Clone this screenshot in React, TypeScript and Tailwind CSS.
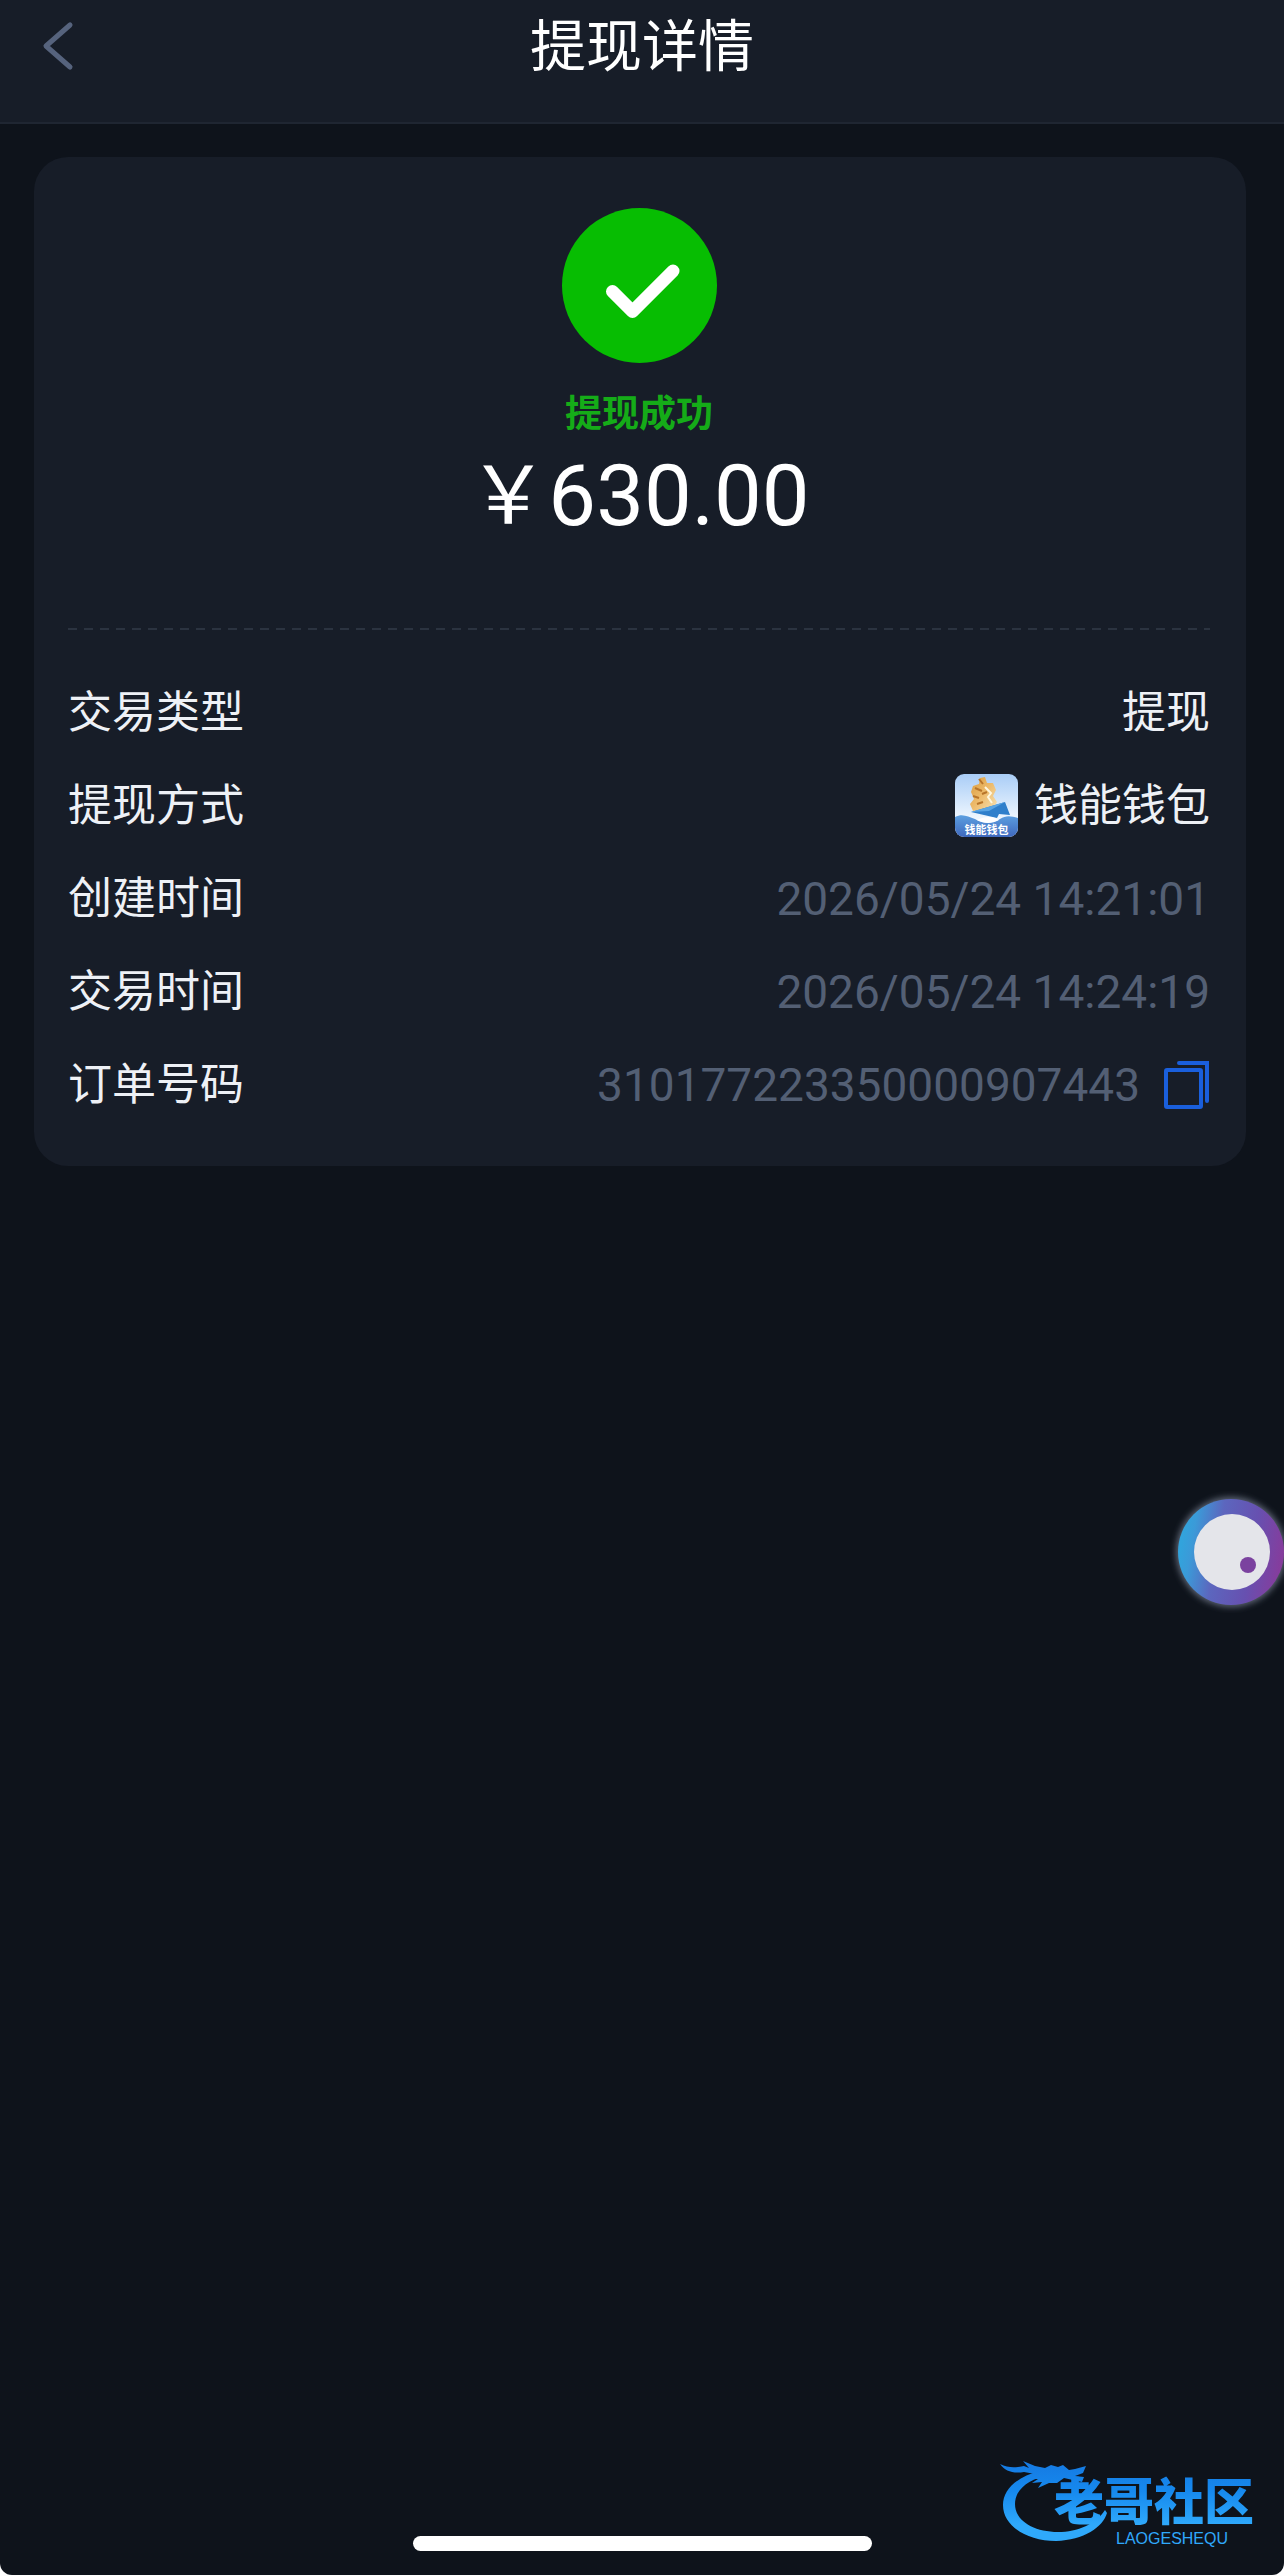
import { ReactNode } from 'react';

const ORDER_NO = '310177223350000907443';

function BackIcon() {
  return (
    <svg width="36" height="52" viewBox="0 0 36 52" fill="none" stroke="#56637d" strokeWidth="5" strokeLinecap="round" strokeLinejoin="round">
      <path d="M30 4 L6 25 L30 46" />
    </svg>
  );
}

function SuccessIcon() {
  return (
    <svg width="155" height="155" viewBox="0 0 155 155" fill="none" aria-hidden="true">
      <circle cx="77.5" cy="77.5" r="77.5" fill="#07bd02" />
      <path d="M50.5 83.5 L70.5 103.5 L111 63" stroke="#fff" strokeWidth="13" strokeLinecap="round" strokeLinejoin="round" />
    </svg>
  );
}

function CopyIcon() {
  return (
    <svg width="46" height="48" viewBox="0 0 46 48" fill="none" stroke="#1a5fdc" strokeWidth="4">
      <rect x="2" y="9" width="35" height="37" rx="1" />
      <path d="M15 2 H43 V40" strokeLinecap="round" />
    </svg>
  );
}

function WalletIcon() {
  return (
    <svg width="63" height="63" viewBox="0 0 63 63" aria-hidden="true">
      <defs>
        <linearGradient id="sky" x1="0" y1="0" x2="0" y2="1">
          <stop offset="0" stopColor="#a9cdf7" />
          <stop offset="0.7" stopColor="#eef6fe" />
        </linearGradient>
        <linearGradient id="sea" x1="0" y1="0" x2="0" y2="1">
          <stop offset="0" stopColor="#5c9fe0" />
          <stop offset="1" stopColor="#3f68bd" />
        </linearGradient>
        <linearGradient id="gold" x1="0" y1="0" x2="1" y2="1">
          <stop offset="0" stopColor="#d99a3c" />
          <stop offset="0.5" stopColor="#edbb6c" />
          <stop offset="1" stopColor="#f7e3b6" />
        </linearGradient>
        <clipPath id="tile">
          <rect width="63" height="63" rx="9" />
        </clipPath>
      </defs>
      <g clipPath="url(#tile)">
        <rect width="63" height="63" fill="url(#sky)" />
        <path d="M25 4 L30 3 L32 9 L38 9 L41 16 L38 22 L42 28 L39 33 L27 36 L18 37 L15 30 L19 25 L16 18 L18 12 L24 10 Z" fill="url(#gold)" />
        <path d="M24 5 l4 5 M20 14 l7 3 M18 22 l6 2 M27 20 l5 -2 M22 30 l6 -2" stroke="#b8752a" strokeWidth="2" />
        <path d="M30 13 l6 6 -3 4 4 6" stroke="#fff7df" strokeWidth="2" fill="none" />
        <path d="M16 38 L50 28 L55 41 L44 40 L42 44 Z" fill="#2f7fcb" />
        <path d="M16 38 L50 28 L34 37 Z" fill="#5aa5e4" />
        <path d="M0 43 C8 39 13 43 20 45 C28 50 37 50 45 45 C51 41 56 42 63 44 V63 H0 Z" fill="url(#sea)" />
        <path d="M22 46 C30 42 38 42 44 46 C37 50 29 50 22 46 Z" fill="#fff" />
        <text x="31.5" y="60" textAnchor="middle" fontSize="11" fontWeight="700" fill="#fff" fontFamily="Noto Sans CJK SC, sans-serif">钱能钱包</text>
      </g>
    </svg>
  );
}

function AssistIcon() {
  return (
    <svg width="122" height="122" viewBox="0 0 122 122" aria-hidden="true">
      <defs>
        <linearGradient id="ring" x1="0" y1="0.62" x2="0.95" y2="0.78">
          <stop offset="0" stopColor="#32a3dc" />
          <stop offset="0.1" stopColor="#3b9ad8" />
          <stop offset="0.35" stopColor="#5c66be" />
          <stop offset="0.7" stopColor="#6750b0" />
          <stop offset="1" stopColor="#863c9c" />
        </linearGradient>
        <filter id="halo" x="-20%" y="-20%" width="140%" height="140%">
          <feGaussianBlur stdDeviation="3" />
        </filter>
      </defs>
      <circle cx="61" cy="61" r="55" fill="#5d6574" filter="url(#halo)" />
      <circle cx="61" cy="61" r="53" fill="url(#ring)" />
      <circle cx="62" cy="61" r="38" fill="#e4e5ea" />
      <circle cx="78" cy="74" r="8" fill="#7b429f" />
    </svg>
  );
}

function CommunityLogo() {
  return (
    <svg width="272" height="100" viewBox="0 0 272 100" role="img" aria-label="老哥社区">
      <defs>
        <linearGradient id="brand" gradientUnits="userSpaceOnUse" x1="0" y1="10" x2="0" y2="95">
          <stop offset="0" stopColor="#1577e0" />
          <stop offset="0.4" stopColor="#1689ee" />
          <stop offset="0.8" stopColor="#2fa9fb" />
          <stop offset="1" stopColor="#2fa9fb" />
        </linearGradient>
      </defs>
      <g fill="url(#brand)">
        <path d="M44 24 C20 30 7 43 7 58 C7 79 31 94 60 94 C88 93 107 80 111 66 L109 63 C100 77 82 85 62 85 C38 85 19 74 19 57 C19 44 30 34 48 29 Z" />
        <path d="M4 17 C12 21 19 21 28 19 L33 21 L27 14 L39 19 L49 21 L55 18 L62 20 L67 18 L73 23 L79 22 L90 19 L87 26 L79 29 L88 30 L86 35 L77 33 L68 31 L61 36 L53 36 L42 41 L46 35 L36 36 L42 32 L30 32 L39 27 L28 25 C17 27 9 24 4 17 Z" />
        <text x="58" y="73" fontSize="50" fontWeight="900" fontFamily="Noto Sans CJK SC, sans-serif">老哥社区</text>
        <text x="120" y="97" fontSize="16" fontFamily="Liberation Sans, sans-serif">LAOGESHEQU</text>
      </g>
    </svg>
  );
}

function Row({ label, muted, children }: { label: string; muted?: boolean; children: ReactNode }) {
  return (
    <div className="h-[93px] flex items-center justify-between">
      <dt className="text-[44px] leading-[60px] text-[#eef1f6]">{label}</dt>
      <dd className={muted ? 'flex items-center text-[46px] leading-[60px] text-[#535f74]' : 'flex items-center text-[44px] leading-[60px] text-[#eef1f6]'}>
        {children}
      </dd>
    </div>
  );
}

export default function App() {
  const copyOrder = () => navigator.clipboard?.writeText(ORDER_NO);

  return (
    <div className="bg-white">
      <div className="relative min-h-screen overflow-hidden flex flex-col rounded-b-xl bg-[#0e131b] font-['Roboto','Noto_Sans_CJK_SC',sans-serif]">
        <header className="h-[124px] px-10 pb-7 grid grid-cols-[1fr_auto_1fr] items-center bg-[#171d28] border-b-2 border-[#1f2632]">
          <button type="button" aria-label="返回" className="justify-self-start"><BackIcon /></button>
          <h1 className="text-[56px] leading-[80px] text-white">提现详情</h1>
        </header>

        <main className="mt-[33px] ml-[34px] mr-[38px] pt-[51px] pb-[35px] pl-[34px] pr-9 rounded-[34px] bg-[#171d28]">
          <div className="flex flex-col items-center">
            <SuccessIcon />
            <p className="mt-6 text-[37px] leading-[56px] font-bold text-[#15ac18]">提现成功</p>
            <p className="mt-[3px] flex items-center text-[85px] leading-[100px] text-white">
              <span className="text-[80px]">￥</span>630.00
            </p>
          </div>

          <div className="mt-[82px] h-[2px] bg-[repeating-linear-gradient(90deg,#2b3340_0_9px,transparent_9px_16px)]" />

          <dl className="mt-9">
            <Row label="交易类型">提现</Row>
            <Row label="提现方式">
              <span className="mr-4"><WalletIcon /></span>
              钱能钱包
            </Row>
            <Row label="创建时间" muted>2026/05/24 14:21:01</Row>
            <Row label="交易时间" muted>2026/05/24 14:24:19</Row>
            <Row label="订单号码" muted>
              {ORDER_NO}
              <button type="button" aria-label="复制订单号码" onClick={copyOrder} className="ml-6"><CopyIcon /></button>
            </Row>
          </dl>
        </main>

        {/* floating assistant, docked to the screen edge */}
        <button type="button" aria-label="助手" className="absolute top-[1491px] -right-2"><AssistIcon /></button>

        <div className="absolute right-4 bottom-7"><CommunityLogo /></div>

        <div className="mt-auto mb-6 self-center w-[459px] h-[15px] rounded-full bg-white" />
      </div>
    </div>
  );
}
